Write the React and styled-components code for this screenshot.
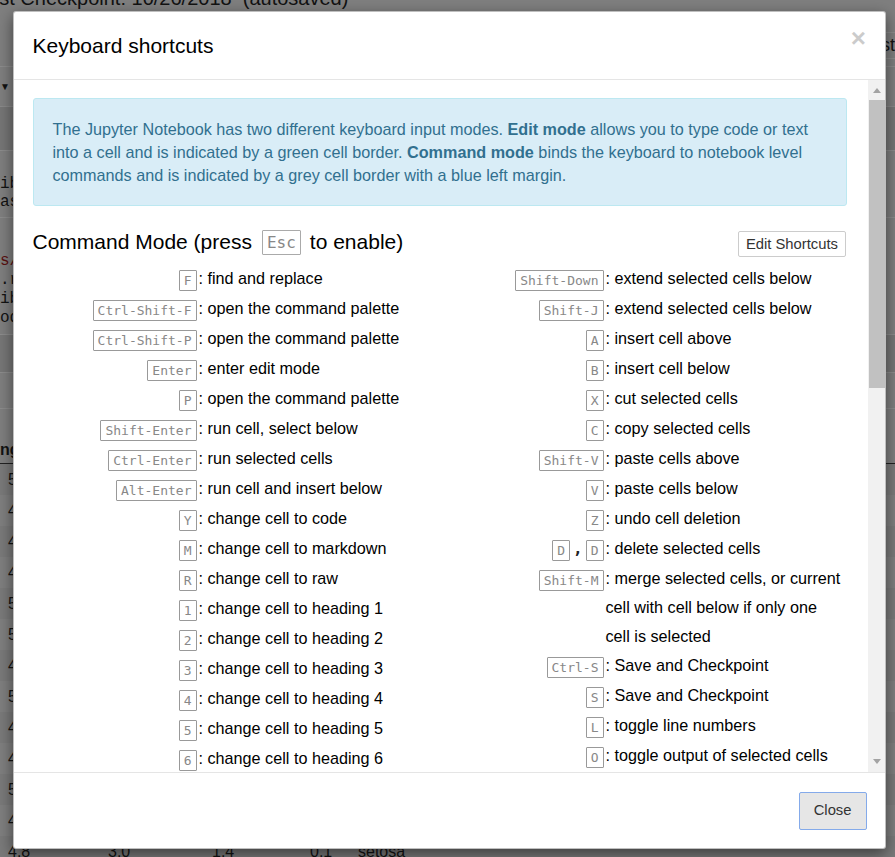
import React from "react";
import styled, { createGlobalStyle } from "styled-components";

const Global = createGlobalStyle`
  html, body { margin: 0; padding: 0; }
  body {
    width: 895px;
    height: 857px;
    overflow: hidden;
    background: #7f7f7f;
    font-family: "Liberation Sans", Arial, sans-serif;
  }
  * { box-sizing: border-box; }
`;

/* ---------- dimmed notebook page behind the dialog ---------- */

const Page = styled.div`
  position: relative;
  width: 895px;
  height: 857px;
  overflow: hidden;
  background: #7f7f7f;
  color: #121212;
  font-family: "Liberation Sans", Arial, sans-serif;
`;

const BgTop = styled.div`
  height: 14px;
  overflow: hidden;
  white-space: nowrap;
  font-size: 20px;
  line-height: 20px;
`;

const BgTopText = styled.div`
  margin-top: -12px;
  margin-left: -23px;
`;

const BgHeader = styled.div`
  height: 53px;
  display: flex;
  justify-content: flex-end;
  align-items: center;
  padding-top: 10px;
  border-bottom: 1px solid #8c8c8c;
  font-size: 18px;
  white-space: nowrap;
`;

const BgTrust = styled.span`
  margin-right: -27px;
  padding: 2px 6px;
  border: 1px solid #8c8c8c;
`;

const BgMenu = styled.div`
  height: 40px;
  display: flex;
  align-items: center;
  font-size: 10px;
  border-bottom: 1px solid #8a8a8a;
`;

const BgToolbar = styled.div`
  height: 44px;
  background: #767676;
  border-bottom: 1px solid #8c8c8c;
`;

const BgCode = styled.div`
  display: flex;
  flex-direction: column;
  padding: ${(p) => p.$pad};
  font-family: "Liberation Mono", monospace;
  font-size: 16px;
  line-height: ${(p) => p.$lh}px;
  border-bottom: 1px solid #8c8c8c;
  white-space: nowrap;
`;

const BgCodeLine = styled.span`
  color: ${(p) => (p.$red ? "#5a1010" : "#121212")};
`;

const BgBand = styled.div`
  height: ${(p) => p.$h}px;
  background: ${(p) => p.$bg || "transparent"};
  border-bottom: 1px solid #8c8c8c;
`;

const BgTableHead = styled.div`
  height: 55px;
  display: flex;
  align-items: flex-end;
  padding-bottom: 4px;
  font-weight: bold;
  font-size: 16px;
  border-bottom: 1px solid #222;
`;

const BgRow = styled.div`
  display: grid;
  grid-template-columns: 100px 104px 98px 48px 80px;
  height: 31px;
  align-items: center;
  padding-left: 8px;
  font-size: 16px;
  background: ${(p) => (p.$odd ? "#7a7a7a" : "#7f7f7f")};
`;

/* ---------- dialog ---------- */

const Modal = styled.div`
  position: absolute;
  top: 11px;
  left: 13px;
  width: 873px;
  height: 838px;
  display: flex;
  flex-direction: column;
  background: #fff;
  border: 1px solid rgba(0, 0, 0, 0.25);
  border-radius: 3px;
  box-shadow: 0 5px 15px rgba(0, 0, 0, 0.5);
  color: #000;
`;

const Header = styled.div`
  flex: none;
  display: flex;
  justify-content: space-between;
  align-items: flex-start;
  padding: 18.5px 19px 18.5px 18.5px;
  border-bottom: 1px solid #e5e5e5;
`;

const Title = styled.h4`
  margin: 0;
  font-size: 21px;
  line-height: 30px;
  font-weight: normal;
`;

const CloseX = styled.button`
  margin-top: -6px;
  padding: 0;
  border: 0;
  background: transparent;
  font-family: "Liberation Sans", Arial, sans-serif;
  font-size: 26px;
  font-weight: bold;
  line-height: 1;
  color: #000;
  opacity: 0.2;
  cursor: pointer;
`;

const Body = styled.div`
  flex: 1;
  min-height: 0;
  display: flex;
`;

const Content = styled.div`
  flex: 1;
  min-width: 0;
  overflow: hidden;
  padding: 18px 21px 0 18.5px;
  font-size: 16.2px;
`;

const Alert = styled.div`
  padding: 18.5px 19px;
  background: #d9edf7;
  border: 1px solid #bce8f1;
  border-radius: 3px;
  color: #31708f;
  font-size: 16.2px;
  line-height: 23px;
`;

const HeadRow = styled.div`
  margin-top: 21px;
  display: flex;
  justify-content: space-between;
  align-items: center;
  height: 30px;
`;

const SectionTitle = styled.h4`
  margin: 0;
  font-size: 21px;
  line-height: 30px;
  font-weight: normal;
  display: flex;
  align-items: center;
`;

const TitleKbd = styled.kbd`
  display: inline-block;
  margin: 0 9px 0 10px;
  padding: 2px 4px;
  border: 1px solid #aaa;
  border-radius: 1px;
  font-family: "DejaVu Sans Mono", monospace;
  font-size: 16px;
  line-height: 19px;
  color: #888;
  background: #fff;
`;

const EditButton = styled.button`
  margin: 3px 1px 0 0;
  padding: 1px 7px;
  border: 1px solid #ccc;
  border-radius: 2px;
  background: #fff;
  font-family: "Liberation Sans", Arial, sans-serif;
  font-size: 14.8px;
  line-height: 22px;
  color: #333;
`;

const Columns = styled.div`
  margin-top: 7px;
  display: grid;
  grid-template-columns: 407px 407px;
`;

const Column = styled.div`
  display: flex;
  flex-direction: column;
`;

const Row = styled.div`
  display: flex;
  align-items: flex-start;
  min-height: 30px;
  font-size: 16.2px;
  line-height: 29px;
`;

const Keys = styled.span`
  flex: none;
  width: 166px;
  text-align: right;
  white-space: nowrap;
  font-family: "DejaVu Sans Mono", monospace;
  font-size: 16px;
`;

const Kbd = styled.kbd`
  display: inline-block;
  vertical-align: -1px;
  margin: 0 2px;
  padding: 1px 4px;
  border: 1px solid #999;
  border-radius: 1px;
  font-family: "DejaVu Sans Mono", monospace;
  font-size: 13px;
  line-height: 17px;
  color: #888;
  background: #fff;
`;

const Sep = styled.span`
  font-weight: bold;
  color: #222;
  margin: 0 1px;
`;

const Descr = styled.span`
  flex: none;
  width: 238px;
`;

const ScrollBar = styled.div`
  flex: none;
  width: 17px;
  display: flex;
  flex-direction: column;
  background: #f1f1f1;
`;

const ScrollBtn = styled.div`
  height: 17px;
  flex: none;
  display: flex;
  align-items: center;
  justify-content: center;
`;

const Arrow = styled.span`
  width: 0;
  height: 0;
  border-left: 4.5px solid transparent;
  border-right: 4.5px solid transparent;
  ${(p) =>
    p.$down
      ? "border-top: 5px solid #a3a3a3; margin-top: -4px;"
      : "border-bottom: 5px solid #a3a3a3; margin-top: 3px;"}
`;

const Track = styled.div`
  flex: 1;
  display: flex;
  flex-direction: column;
`;

const Thumb = styled.div`
  margin: 3px 0 0 1px;
  height: 288px;
  background: #c1c1c1;
`;

const Footer = styled.div`
  flex: none;
  display: flex;
  justify-content: flex-end;
  padding: 18.5px;
  border-top: 1px solid #e5e5e5;
`;

const CloseButton = styled.button`
  padding: 7.5px 14px;
  border: 1px solid #84aaea;
  border-radius: 2px;
  background: #e6e6e6;
  font-family: "Liberation Sans", Arial, sans-serif;
  font-size: 14.8px;
  line-height: 21px;
  color: #333;
`;

const left = [
  [["F"], "find and replace"],
  [["Ctrl-Shift-F"], "open the command palette"],
  [["Ctrl-Shift-P"], "open the command palette"],
  [["Enter"], "enter edit mode"],
  [["P"], "open the command palette"],
  [["Shift-Enter"], "run cell, select below"],
  [["Ctrl-Enter"], "run selected cells"],
  [["Alt-Enter"], "run cell and insert below"],
  [["Y"], "change cell to code"],
  [["M"], "change cell to markdown"],
  [["R"], "change cell to raw"],
  [["1"], "change cell to heading 1"],
  [["2"], "change cell to heading 2"],
  [["3"], "change cell to heading 3"],
  [["4"], "change cell to heading 4"],
  [["5"], "change cell to heading 5"],
  [["6"], "change cell to heading 6"],
  [["K"], "select cell above"],
  [["Up"], "select cell above"],
  [["Down"], "select cell below"],
  [["J"], "select cell below"],
  [["Shift-K"], "extend selected cells above"],
  [["Shift-Up"], "extend selected cells above"],
];

const right = [
  [["Shift-Down"], "extend selected cells below"],
  [["Shift-J"], "extend selected cells below"],
  [["A"], "insert cell above"],
  [["B"], "insert cell below"],
  [["X"], "cut selected cells"],
  [["C"], "copy selected cells"],
  [["Shift-V"], "paste cells above"],
  [["V"], "paste cells below"],
  [["Z"], "undo cell deletion"],
  [["D", "D"], "delete selected cells"],
  [["Shift-M"], "merge selected cells, or current cell with cell below if only one cell is selected"],
  [["Ctrl-S"], "Save and Checkpoint"],
  [["S"], "Save and Checkpoint"],
  [["L"], "toggle line numbers"],
  [["O"], "toggle output of selected cells"],
  [["Shift-O"], "toggle output scrolling of selected cells"],
  [["H"], "show keyboard shortcuts"],
  [["I", "I"], "interrupt the kernel"],
  [["0", "0"], "restart the kernel (with dialog)"],
];

const iris = [
  ["5.1", "3.5", "1.4", "0.2"],
  ["4.9", "3.0", "1.4", "0.2"],
  ["4.7", "3.2", "1.3", "0.2"],
  ["4.6", "3.1", "1.5", "0.2"],
  ["5.0", "3.6", "1.4", "0.2"],
  ["5.4", "3.9", "1.7", "0.4"],
  ["4.6", "3.4", "1.4", "0.3"],
  ["5.0", "3.4", "1.5", "0.2"],
  ["4.4", "2.9", "1.4", "0.2"],
  ["4.9", "3.1", "1.5", "0.1"],
  ["5.4", "3.7", "1.5", "0.2"],
  ["4.8", "3.4", "1.6", "0.2"],
  ["4.8", "3.0", "1.4", "0.1"],
];

function Shortcut({ keys, text }) {
  return (
    <Row>
      <Keys>
        {keys.map((k, i) => (
          <React.Fragment key={i}>
            {i > 0 && <Sep>,</Sep>}
            <Kbd>{k}</Kbd>
          </React.Fragment>
        ))}
      </Keys>
      <Descr>: {text}</Descr>
    </Row>
  );
}

export default function App() {
  return (
    <>
      <Global />
      <Page>
        <BgTop>
          <BgTopText>Last Checkpoint: 10/26/2018 &nbsp;(autosaved)</BgTopText>
        </BgTop>
        <BgHeader>
          <BgTrust>Trusted</BgTrust>
        </BgHeader>
        <BgMenu>▼</BgMenu>
        <BgToolbar />
        <BgCode $pad="24px 0 6px" $lh={18}>
          <BgCodeLine>ib</BgCodeLine>
          <BgCodeLine>as</BgCodeLine>
        </BgCode>
        <BgCode $pad="34px 0 6px" $lh={19}>
          <BgCodeLine $red>s/</BgCodeLine>
          <BgCodeLine>.r</BgCodeLine>
          <BgCodeLine>ib</BgCodeLine>
          <BgCodeLine>od</BgCodeLine>
        </BgCode>
        <BgBand $h={38} $bg="#777" />
        <BgBand $h={36} />
        <BgTableHead>ng</BgTableHead>
        {iris.map((r, i) => (
          <BgRow key={i} $odd={i % 2 === 0}>
            <span>{r[0]}</span>
            <span>{r[1]}</span>
            <span>{r[2]}</span>
            <span>{r[3]}</span>
            <span>setosa</span>
          </BgRow>
        ))}

        <Modal role="dialog">
          <Header>
            <Title>Keyboard shortcuts</Title>
            <CloseX aria-label="Close">×</CloseX>
          </Header>
          <Body>
            <Content>
              <Alert>
                The Jupyter Notebook has two different keyboard input modes. <b>Edit mode</b> allows you to type code or
                text into a cell and is indicated by a green cell border. <b>Command mode</b> binds the keyboard to
                notebook level commands and is indicated by a grey cell border with a blue left margin.
              </Alert>
              <HeadRow>
                <SectionTitle>
                  Command Mode (press<TitleKbd>Esc</TitleKbd>to enable)
                </SectionTitle>
                <EditButton>Edit Shortcuts</EditButton>
              </HeadRow>
              <Columns>
                <Column>
                  {left.map(([k, t], i) => (
                    <Shortcut key={i} keys={k} text={t} />
                  ))}
                </Column>
                <Column>
                  {right.map(([k, t], i) => (
                    <Shortcut key={i} keys={k} text={t} />
                  ))}
                </Column>
              </Columns>
            </Content>
            <ScrollBar>
              <ScrollBtn>
                <Arrow />
              </ScrollBtn>
              <Track>
                <Thumb />
              </Track>
              <ScrollBtn>
                <Arrow $down />
              </ScrollBtn>
            </ScrollBar>
          </Body>
          <Footer>
            <CloseButton>Close</CloseButton>
          </Footer>
        </Modal>
      </Page>
    </>
  );
}
